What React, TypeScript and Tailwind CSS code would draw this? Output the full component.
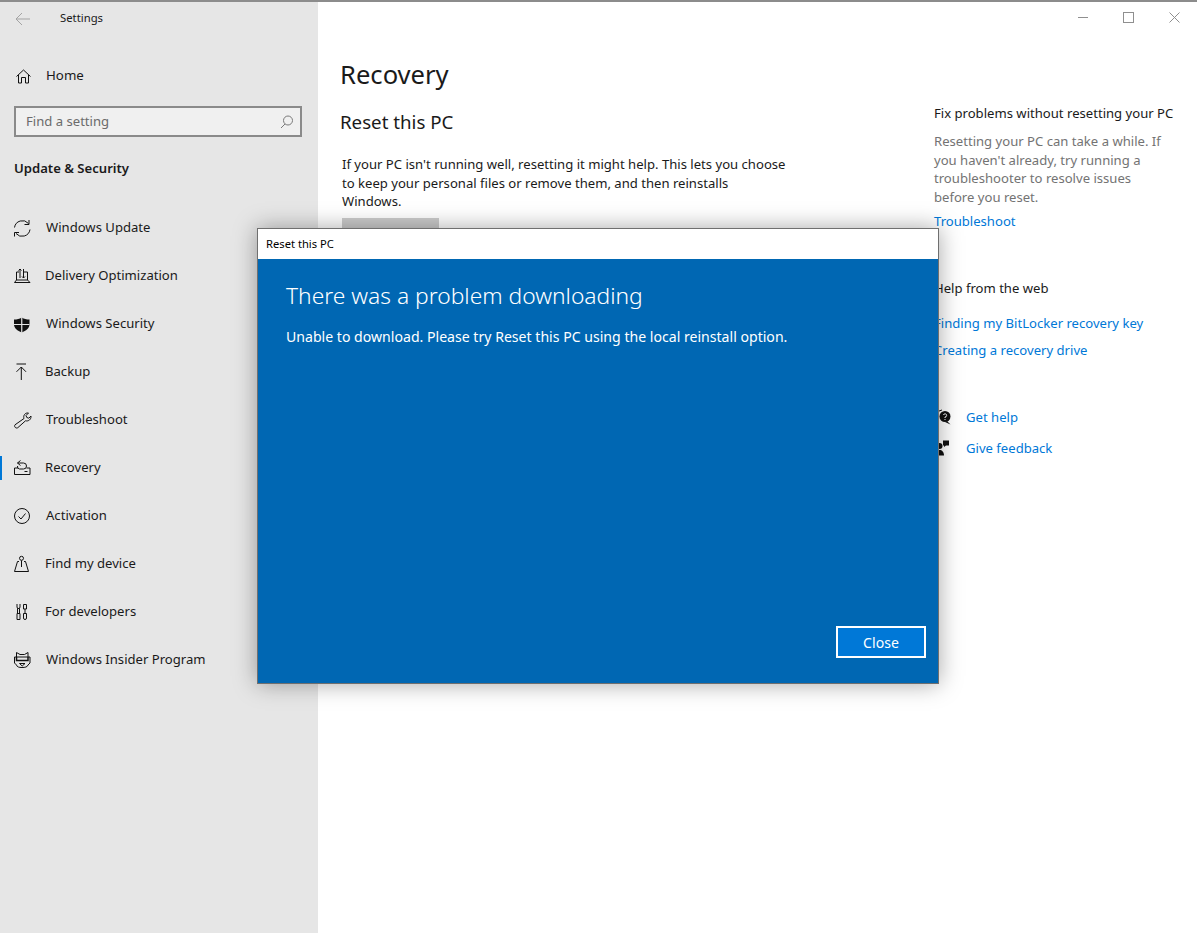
import React from "react";

const stroke = { fill: "none", stroke: "#111", strokeWidth: 1 };

const icons: Record<string, React.ReactNode> = {
  update: (
    <g {...stroke}>
      <path d="M0.5 7.5A8 8 0 0 1 14.5 3.5" />
      <path d="M16 9.5A8 8 0 0 1 2 13.5" />
      <path d="M15 0V4.5H10.5" />
      <path d="M0.5 16.5V12.5H5" />
    </g>
  ),
  delivery: (
    <g {...stroke}>
      <path d="M2.5 12V4H5M10 4H13.5V12" />
      <path d="M0.5 14.5H16M0.5 14.5L2.5 12H13.5L16 14.5" />
      <path d="M6 10V1M4.5 2.5L6 1L7.5 2.5M9.5 1V10M8 8.5L9.5 10L11 8.5" />
    </g>
  ),
  security: (
    <g>
      <path d="M7.75 1.5C5.5 3 3 3.5 0 3.5V8.5C0 12 3.5 15 7.75 16.5C12 15 15.5 12 15.5 8.5V3.5C12.5 3.5 10 3 7.75 1.5Z" fill="#111" />
      <path d="M7.75 1V17M0 8.5H15.5" stroke="#e6e6e6" strokeWidth="1.2" />
    </g>
  ),
  backup: (
    <g {...stroke}>
      <path d="M2.5 0H12" />
      <path d="M7.3 16V3M2.5 7.8L7.3 3L12 7.8" />
    </g>
  ),
  troubleshoot: (
    <g {...stroke}>
      <path d="M10 6.5C9 3.5 11 0.5 14.5 1L12 3.5L12.8 5.5L14.8 6.2L17 4C17.3 7.5 14.5 9.5 11.5 8.8L4 15.5C2.5 17 -0.5 15 1 12.8Z" />
    </g>
  ),
  recovery: (
    <g {...stroke}>
      <path d="M0.5 8V14.5H16V8H12.5" />
      <path d="M0.5 8H4" />
      <path d="M3.5 3H9.5A3 3 0 0 1 9.5 9H5.5A2.6 2.6 0 0 1 3.5 6" />
      <path d="M6.5 0.5L3.5 3L6.5 5.5" />
      <path d="M10.5 11.5H13.5" />
    </g>
  ),
  activation: (
    <g {...stroke}>
      <circle cx="8" cy="8" r="7.5" />
      <path d="M4.5 8.5L7 11L11.5 5.5" />
    </g>
  ),
  find: (
    <g {...stroke}>
      <circle cx="7.5" cy="2.3" r="2" />
      <path d="M7.5 4.5V11M5 5.5H3.5L0.5 15.5H14.5L11.5 5.5H10" />
    </g>
  ),
  developers: (
    <g {...stroke}>
      <path d="M3 0V3A1.5 1.5 0 0 0 6 3V0M3.5 4.5H5.5V9.5H3.5ZM3 9.5H6V15.5H3Z" />
      <path d="M9.5 0.5H12.5V5H9.5ZM11 5V9.5M9.5 9.5H12.5V14A1.5 1.5 0 0 1 9.5 14Z" />
    </g>
  ),
  insider: (
    <g {...stroke}>
      <path d="M2.5 5V0.5L6 2.5H10.5L14 0.5V5" />
      <path d="M2.5 5H0.5V11L2.5 13C3 15 5 15.5 8 15.5C11 15.5 13.5 15 14 13L16 11V5H14Z" />
      <path d="M2.5 5V8.5H14V5" strokeWidth="1.5" />
      <path d="M5.5 11.5H11L8.2 14Z" />
    </g>
  ),
};

const navItems = [
  { label: "Windows Update", icon: "update", textX: "ml-[15px]" },
  { label: "Delivery Optimization", icon: "delivery", textX: "ml-[14px]" },
  { label: "Windows Security", icon: "security", textX: "ml-[15px]" },
  { label: "Backup", icon: "backup", textX: "ml-[14px]" },
  { label: "Troubleshoot", icon: "troubleshoot", textX: "ml-[15px]" },
  { label: "Recovery", icon: "recovery", textX: "ml-[14px]", active: true },
  { label: "Activation", icon: "activation", textX: "ml-[15px]" },
  { label: "Find my device", icon: "find", textX: "ml-[14px]" },
  { label: "For developers", icon: "developers", textX: "ml-[14px]" },
  { label: "Windows Insider Program", icon: "insider", textX: "ml-[15px]" },
];

function NavItem({ label, icon, textX, active }: { label: string; icon: string; textX: string; active?: boolean }) {
  return (
    <div className="relative flex h-[48px] items-center pl-[14px] text-[13.1px] text-[#1a1a1a]">
      {active && <div className="absolute left-0 top-[12px] h-[24px] w-[2px] bg-[#0078d7]" />}
      <svg width="17" height="17" viewBox="0 0 17 17" className="shrink-0 overflow-visible">
        {icons[icon]}
      </svg>
      <span className={textX}>{label}</span>
    </div>
  );
}

export default function App() {
  return (
    <div
      className="relative h-[933px] w-[1197px] overflow-hidden bg-white"
      style={{ fontFamily: '"Noto Sans", "Open Sans", sans-serif' }}
    >
      <div className="h-[2px] bg-[#8c8c8c]" />
      <div className="flex h-[931px]">
        {/* sidebar */}
        <aside className="w-[318px] shrink-0 bg-[#e6e6e6]">
          <div className="flex h-[33px] items-center pl-[15px]">
            <svg width="16" height="14" viewBox="0 0 16 14" fill="none" stroke="#a3a3a3">
              <path d="M15 7H1M7 1L1 7L7 13" />
            </svg>
            <span className="ml-[29px] text-[11.3px] text-[#1a1a1a]">Settings</span>
          </div>
          <div className="mt-[26px] flex h-[30px] items-center pl-[16px] text-[13.3px] text-[#1a1a1a]">
            <svg width="15" height="15" viewBox="0 0 15 15" fill="none" stroke="#111">
              <path d="M0.5 7.5L7.5 1L14.5 7.5M2.5 6V14H5.5V8.5H9.5V14H12.5V6" />
            </svg>
            <span className="ml-[15px]">Home</span>
          </div>
          <div className="ml-[14px] mt-[15px] flex h-[31px] w-[288px] items-center justify-between border-2 border-[#8a8a8a] bg-[#f0f0f0] pl-[10px] pr-[7px] text-[13.1px] text-[#6b6b6b]">
            <span>Find a setting</span>
            <svg width="13" height="14" viewBox="0 0 13 14" fill="none" stroke="#7a7a7a">
              <circle cx="8" cy="5.5" r="4.5" />
              <path d="M5 9L1 13" />
            </svg>
          </div>
          <div className="ml-[14px] mt-[22px] text-[13.1px] font-semibold leading-[18px] text-[#1a1a1a]">Update &amp; Security</div>
          <nav className="mt-[27px]">
            {navItems.map((item) => (
              <NavItem key={item.label} {...item} />
            ))}
          </nav>
        </aside>

        {/* content */}
        <main className="relative flex-1">
          <div className="flex justify-end pr-[17px] pt-[10px]">
            <div className="flex items-center gap-[35px]">
              <div className="h-px w-[10px] bg-[#8f8f8f]" />
              <div className="h-[11px] w-[11px] border border-[#8f8f8f]" />
              <svg width="11" height="11" viewBox="0 0 11 11" stroke="#8f8f8f">
                <path d="M0.5 0.5L10.5 10.5M10.5 0.5L0.5 10.5" />
              </svg>
            </div>
          </div>
          <div className="flex">
            <div className="w-[616px] shrink-0 pl-[22px]">
              <h1 className="mt-[34px] text-[25.6px] leading-[36px] text-[#1a1a1a]">Recovery</h1>
              <h2 className="mt-[16px] text-[18.7px] leading-[26px] text-[#1a1a1a]">Reset this PC</h2>
              <p className="ml-[2px] mt-[20px] w-[446px] text-[13.1px] leading-[18.5px] text-[#1a1a1a]">
                If your PC isn't running well, resetting it might help. This lets you choose to keep your personal files or
                remove them, and then reinstalls Windows.
              </p>
              <div className="ml-[2px] mt-[7px] h-[32px] w-[97px] bg-[#cccccc]" />
            </div>
            <div className="pt-[81px] text-[13.1px] leading-[19px]">
              <div className="text-[#1a1a1a]">Fix problems without resetting your PC</div>
              <p className="mt-[9px] w-[240px] leading-[18.7px] text-[#737373]">
                Resetting your PC can take a while. If you haven't already, try running a troubleshooter to resolve issues
                before you reset.
              </p>
              <div className="mt-[5px] text-[#0078d7]">Troubleshoot</div>
              <div className="mt-[48px] text-[#1a1a1a]">Help from the web</div>
              <div className="mt-[16px] text-[#0078d7]">Finding my BitLocker recovery key</div>
              <div className="mt-[8px] text-[#0078d7]">Creating a recovery drive</div>
              <div className="mt-[48px] flex items-center text-[#0078d7]">
                <svg width="18" height="18" viewBox="0 0 18 18" className="shrink-0">
                  <path d="M8 2A6 6 0 0 0 4 12" fill="none" stroke="#111" />
                  <circle cx="11" cy="8.5" r="5.5" fill="#111" />
                  <path d="M13 13L16.5 16.5L11 14Z" fill="#111" />
                  <path d="M9.5 7A1.6 1.6 0 1 1 11 9V10M11 11V12" fill="none" stroke="#fff" />
                </svg>
                <span className="ml-[14px]">Get help</span>
              </div>
              <div className="mt-[12px] flex items-center text-[#0078d7]">
                <svg width="18" height="18" viewBox="0 0 18 18" className="shrink-0">
                  <circle cx="5.5" cy="7" r="3" fill="#111" />
                  <path d="M1 16.5C1 13 3 11 5.5 11C8 11 10 13 10 16.5Z" fill="#111" />
                  <path d="M9 1.5H15V6.5H12L10 8V6.5H9Z" fill="#111" />
                </svg>
                <span className="ml-[14px]">Give feedback</span>
              </div>
            </div>
          </div>
        </main>
      </div>

      {/* dialog */}
      <div className="absolute left-[257px] top-[228px] flex h-[456px] w-[682px] flex-col border border-[#6f6f6f] bg-[#0067b3] shadow-[0_0_22px_rgba(0,0,0,0.35)]">
        <div className="flex h-[30px] shrink-0 items-center bg-white pl-[8px] text-[11.2px] text-black">Reset this PC</div>
        <div className="relative flex-1 px-[28px] pt-[21px] text-white">
          <div className="text-[22.8px] font-light leading-[32px]">There was a problem downloading</div>
          <div className="mt-[15px] text-[14.1px] leading-[20px]">Unable to download. Please try Reset this PC using the local reinstall option.</div>
          <div className="absolute bottom-[25px] right-[12px] flex h-[32px] w-[90px] items-center justify-center border-2 border-white bg-[#0078d7] text-[14.1px]">
            <span className="relative top-[1px]">Close</span>
          </div>
        </div>
      </div>
    </div>
  );
}
